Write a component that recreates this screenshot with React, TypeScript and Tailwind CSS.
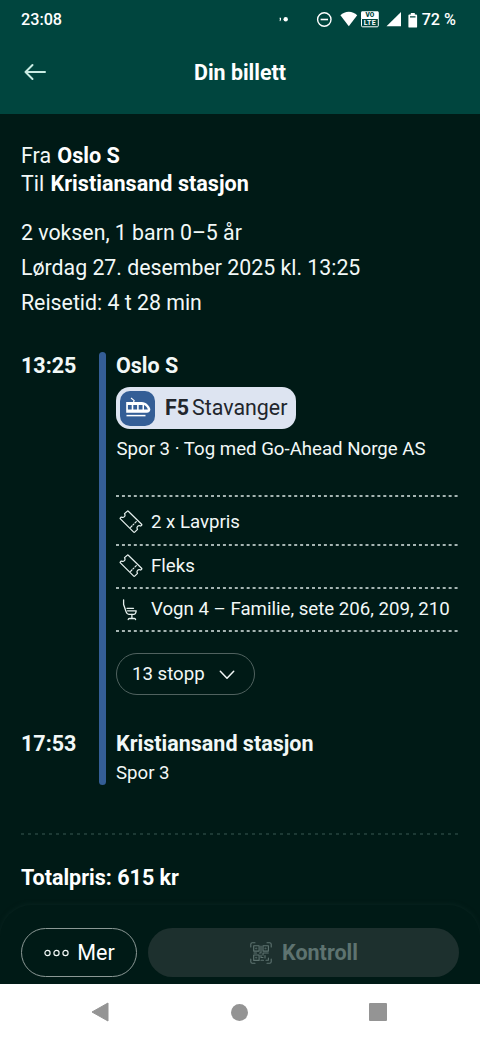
import type { ReactNode } from 'react';

const extras = [
  { icon: <TicketIcon />, label: '2 x Lavpris', height: 'h-[47px] pt-[4px]' },
  { icon: <TicketIcon />, label: 'Fleks', height: 'h-[41px]' },
  { icon: <SeatIcon />, label: 'Vogn 4 – Familie, sete 206, 209, 210', height: 'h-[41px] pt-px' },
];

function TicketIcon() {
  return (
    <svg className="-mt-px" width="24" height="24" viewBox="0 0 24 24" fill="none" stroke="#e6f0ee" strokeWidth="1.2" strokeLinejoin="round" strokeLinecap="round">
      <path d="M9.3 1.2 22.6 14.3c.3.3.3.7 0 1l-.9.8c-1.2-.7-2.4-.5-3.1.3-.7.8-.8 1.9-.1 2.9l-2.8 2.9c-.3.3-.7.3-1 0L1.4 8.9c-.3-.3-.3-.7 0-1l.9-.9c1.1.7 2.3.5 3.1-.3.7-.8.8-2 .1-3.1L8.3 1.2c.3-.3.7-.3 1 0Z" />
      <path d="m17.3 11.6-1.3 1.3M14.8 14.1l-.8.8M12.9 16l-1.3 1.3" />
    </svg>
  );
}

function SeatIcon() {
  return (
    <svg className="-mt-px" width="24" height="24" viewBox="0 0 24 24" fill="none" stroke="#e6f0ee" strokeWidth="1.3" strokeLinejoin="round" strokeLinecap="round">
      <path d="M4.6 1.8v4.7L7.2 14c.6 1.7 1.3 2.3 2.6 2.3H15c1.1 0 1.600-.6 1.800-1.600l.4-1.900H8.600" />
      <path d="M8 10.300h6.500" />
      <path d="M12.900 16.300v4.200M9.200 21.500c.1-.6.5-1 1.200-1h5c.7 0 1.100.4 1.200 1" />
    </svg>
  );
}

function TrainIcon() {
  return (
    <svg width="26" height="22" viewBox="0 0 26 22" fill="none">
      <path d="M1.2 4.900h15.500c4.500 0 8.600 4.600 8.600 7.700 0 2-1.400 3.100-3.400 3.100H1.200Z" fill="#fff" />
      <path d="M2.900 8h3.800v4.400H2.900zM8.300 8h3.800v4.400H8.300zM13.700 8h3.800v4.400h-3.800zM19 8.100c1.800.8 3.200 2.400 3.900 4.300H19z" fill="#345e96" />
      <path d="M1.500 18.600h19" stroke="#fff" strokeWidth="1.5" />
      <path d="m6 1 3.200 2.600-.8 1.600" stroke="#fff" strokeWidth="1.1" />
    </svg>
  );
}

function QrIcon() {
  return (
    <svg width="22" height="22" viewBox="0 0 22 22" fill="none" stroke="#5e7370" strokeWidth="1.1" strokeLinecap="round" strokeLinejoin="round">
      <path d="M.8 5V2.300C.8 1.500 1.500.8 2.300.8H5M17 .8h2.700c.8 0 1.500.7 1.500 1.500V5M21.200 17v2.700c0 .8-.7 1.500-1.500 1.500H17M5 21.200H2.300c-.8 0-1.500-.7-1.500-1.500V17" />
      <path d="M3.700 3.700h5.400v5.400H3.700zM13 3.700h5.400v5.400H13zM3.700 13h5.400v5.400H3.700z" />
      <path d="M6 6h.8v.8H6zM15.300 6h.8v.8h-.8zM6 15.300h.8v.8H6z" strokeWidth=".7" />
      <path d="M11 4v7H9.500M4 11h2.500M11 13v2.500h2M13 13.200V11h5.300M15 13.500V16M11 18.300h2.500M16 18.300h2.400V16" />
    </svg>
  );
}

function DottedLine() {
  return (
    <svg className="block" width="342" height="2" viewBox="0 0 342 2" stroke="#dce8e6" strokeWidth="1.5">
      <path d="M0 1h342" strokeDasharray="3 2.94" />
    </svg>
  );
}

function Station({ time, children }: { time: string; children: ReactNode }) {
  return (
    <div className="flex">
      <span className="w-[95px] shrink-0 text-[21.5px] leading-7 font-bold">{time}</span>
      <div className="flex-1">{children}</div>
    </div>
  );
}

function StatusBar() {
  return (
    <div className="flex h-9 items-center pt-[3px] pr-6 pl-[21px] text-[16.2px] leading-5 font-medium">
      <span>23:08</span>
      <svg className="ml-auto" width="122" height="20" viewBox="278 8 122 20" fill="#fff">
        <circle cx="284.7" cy="17.3" r="2.2" />
        <path d="M278.5 15.800h1.500c.2 1.500 0 2.500-.9 3.400l-.6-.3c.4-.6.5-1 .3-1.600Z" />
        <circle cx="323.300" cy="17.500" r="6.700" fill="none" stroke="#fff" strokeWidth="1.4" />
        <path d="M319.600 16.700h7.400v1.600h-7.400z" />
        <path d="M347.800 24.300 339.400 13.200c2.300-2.200 5.200-3.500 8.400-3.500s6.100 1.300 8.400 3.500Z" />
        <path d="M361.500 9.200h14.800c.9 0 1.500.6 1.500 1.500V16.500H360v-5.800c0-.9.6-1.500 1.500-1.500Z" />
        <path d="M360.500 16.500h16.800v7.300c0 .6-.4 1-1 1h-14.800c-.6 0-1-.4-1-1Z" fill="none" stroke="#fff" />
        <text x="368.900" y="15.300" textAnchor="middle" fill="#00453e" className="font-[Roboto,sans-serif] text-[6.5px] font-black">VO</text>
        <text x="368.900" y="23.300" textAnchor="middle" className="font-[Roboto,sans-serif] text-[7px] font-bold tracking-[0.3px]">LTE</text>
        <path d="M385.500 24.300 400 10v14.300Z" />
      </svg>
      <svg className="ml-[7px]" width="10" height="16" viewBox="0 0 10 16" fill="#fff">
        <path fillRule="evenodd" d="M2.800 1h4v1.500h1.400c.5 0 .9.4.9.9v11.300c0 .5-.4.9-.9.9H1.300c-.5 0-.9-.4-.9-.9V3.400c0-.5.4-.9.9-.9h1.500ZM2 4.200v1.400h5.500V4.200Z" />
      </svg>
      <span className="ml-[4px]">72 %</span>
    </div>
  );
}

export default function App() {
  return (
    <div className="flex h-[1040px] w-[480px] flex-col overflow-hidden bg-[#001a16] font-[Roboto,sans-serif] text-white">
      <header className="h-[114px] shrink-0 bg-[#00453e]">
        <StatusBar />
        <div className="grid h-[72px] grid-cols-[1fr_auto_1fr] items-center px-6">
          <svg width="22" height="18" viewBox="0 0 22 18" fill="none" stroke="#c9ece3" strokeWidth="2" strokeLinecap="round" strokeLinejoin="round">
            <path d="M21 9H1.500M8.500 2l-7 7 7 7" />
          </svg>
          <h1 className="pt-px text-[21.4px] leading-7 font-bold">Din billett</h1>
        </div>
      </header>

      <main className="h-[791px] shrink-0 px-[21px] pt-7 text-[#f2f8f7]">
        <div className="text-[21.4px] leading-7">
          <p>Fra <b className="ml-px text-[21.6px] text-white">Oslo S</b></p>
          <p>Til <b className="ml-px text-[21.6px] text-white">Kristiansand stasjon</b></p>
        </div>
        <div className="mt-[17px] text-[21.300px] leading-[35px]">
          <p>2 voksen, 1 barn 0–5 år</p>
          <p>Lørdag 27. desember 2025 kl. 13:25</p>
          <p>Reisetid: 4 t 28 min</p>
        </div>

        <div className="relative mt-8 h-[433px]">
          <div className="absolute top-0 left-[77.5px] h-[433px] w-[7px] rounded-full bg-[#345e96]" />
          <Station time="13:25">
            <h2 className="text-[21.5px] leading-7 font-bold">Oslo S</h2>
            <div className="mt-[7px] flex h-[42px] w-[179.5px] items-center rounded-[14px] bg-[#dde4f1] pl-[4px] text-[#22262c]">
              <div className="flex size-[35px] items-center justify-center rounded-[10px] bg-[#345e96]">
                <TrainIcon />
              </div>
              <span className="ml-[10px] text-[21.4px] font-bold">F5</span>
              <span className="ml-[3px] text-[21.4px]">Stavanger</span>
            </div>
            <p className="mt-[7px] pl-[0.5px] text-[18.65px] leading-[26px]">Spor 3 · Tog med Go-Ahead Norge AS</p>
            <div className="mt-[33px]">
              <DottedLine />
              {extras.map((extra) => (
                <div key={extra.label}>
                  <div className={`flex items-center gap-2 pl-[3px] text-[18.65px] whitespace-nowrap ${extra.height}`}>
                    {extra.icon}
                    <span>{extra.label}</span>
                  </div>
                  <DottedLine />
                </div>
              ))}
            </div>
            <button className="mt-[21px] flex h-[42px] w-[139px] items-center rounded-full border border-[#50625f] pt-px pl-[15px] text-[18.65px]">
              13 stopp
              <svg className="ml-[14px]" width="16" height="10" viewBox="0 0 16 10" fill="none" stroke="#f2f8f7" strokeWidth="1.5" strokeLinecap="round" strokeLinejoin="round">
                <path d="m1.300 1.300 6.700 6.900 6.700-6.900" />
              </svg>
            </button>
          </Station>
          <div className="mt-[35px]">
            <Station time="17:53">
              <h2 className="text-[21.5px] leading-7 font-bold">Kristiansand stasjon</h2>
              <p className="mt-[2px] text-[18.65px] leading-[26px]">Spor 3</p>
            </Station>
          </div>
        </div>

        <div className="mt-[48px] h-[2px] bg-[repeating-linear-gradient(90deg,#1c3934_0_3px,transparent_3px_7px)]" />
        <p className="mt-[29px] text-[21.5px] leading-7 font-bold text-white">Totalpris: 615 kr</p>
      </main>

      <div className="flex h-[79px] shrink-0 gap-[11px] rounded-t-[32px] px-[21px] pt-[23px] shadow-[0_-1px_4px_#08231f]">
        <button className="flex h-[49px] w-[116px] items-center justify-center gap-2 rounded-full border border-[#8b9895] pt-px pl-px text-[21.5px]">
          <svg width="25" height="8" viewBox="0 0 25 8" fill="none" stroke="#f2f8f7" strokeWidth="1.2">
            <circle cx="3.5" cy="4" r="2.6" />
            <circle cx="12.5" cy="4" r="2.6" />
            <circle cx="21.5" cy="4" r="2.6" />
          </svg>
          Mer
        </button>
        <button className="flex h-[49px] w-[311px] items-center justify-center gap-[10px] rounded-full bg-[#1d302e] pt-px pl-px text-[21.5px] font-bold text-[#5e7370]" disabled>
          <QrIcon />
          Kontroll
        </button>
      </div>

      <nav className="flex h-14 shrink-0 items-center justify-between bg-white pr-[93px] pl-[91px]">
        <svg width="18" height="20" viewBox="0 0 18 20" fill="#949494" stroke="#949494" strokeLinejoin="round">
          <path d="M1 10 17 1v18Z" />
        </svg>
        <div className="ml-px size-[17px] rounded-full bg-[#949494]" />
        <div className="size-[18px] rounded-[1px] bg-[#949494]" />
      </nav>
    </div>
  );
}
